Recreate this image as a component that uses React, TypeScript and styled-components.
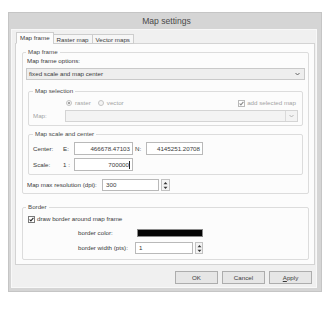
import React from 'react';
import styled, { createGlobalStyle } from 'styled-components';

const GlobalStyle = createGlobalStyle`
  body {
    margin: 0;
    background: #fff;
    font-family: "Liberation Sans", Arial, sans-serif;
  }
`;

const Page = styled.div`
  padding: 12px 0 0 8px;
`;

const Dialog = styled.div`
  width: 314px;
  box-sizing: border-box;
  background: #d5d5d5;
  border: 1px solid #c5c5c5;
  padding: 0 4px 3px 2px;
  display: flex;
  flex-direction: column;
`;

const TitleBar = styled.div`
  height: 16px;
  padding-left: 5px;
  display: flex;
  align-items: center;
  justify-content: center;
  font-size: 8.6px;
  color: #4a4a4a;
`;

const Body = styled.div`
  background: #f0f0f0;
  border: 1px solid #f8f8f8;
  padding: 2px 1px 3px 3px;
  display: flex;
  flex-direction: column;
`;

const TabStrip = styled.div`
  display: flex;
  align-items: flex-end;
  height: 12px;
  padding-left: 1px;
  margin-bottom: -1px;
  position: relative;
  z-index: 1;
`;

const Tab = styled.div<{ $active?: boolean }>`
  box-sizing: border-box;
  height: ${p => (p.$active ? 12 : 10)}px;
  padding: 0 3px ${p => (p.$active ? 2 : 0)}px;
  margin-left: ${p => (p.$active ? 0 : -1)}px;
  border: 1px solid #cdcdcd;
  border-bottom-color: ${p => (p.$active ? '#fcfcfc' : '#cdcdcd')};
  background: ${p => (p.$active ? '#fcfcfc' : '#f6f6f6')};
  display: flex;
  align-items: center;
  font-size: 6.2px;
  color: #3a3a3a;
  white-space: nowrap;
`;

const Panel = styled.div`
  border: 1px solid #d3d3d3;
  background: #fcfcfc;
  padding: 4px 5px 4px 6px;
  display: flex;
  flex-direction: column;
`;

const OuterGroup = styled.fieldset<{ $gap?: number }>`
  margin: ${p => p.$gap ?? 0}px 0 0;
  border: 1px solid #dcdcdc;
  border-radius: 2px;
  padding: 1px 3px 2px;
  min-width: 0;
  display: flex;
  flex-direction: column;
`;

const InnerGroup = styled.fieldset<{ $gap: number }>`
  margin: ${p => p.$gap}px 2px 0;
  border: 1px solid #dcdcdc;
  border-radius: 2px;
  padding: 4px 4px 3px;
  min-width: 0;
`;

const Legend = styled.legend`
  font-size: 6.2px;
  line-height: 8px;
  color: #4a4a4a;
  padding: 0 2px;
`;

const Text = styled.span<{ $muted?: boolean }>`
  font-size: 6.2px;
  line-height: 8px;
  color: ${p => (p.$muted ? '#a3a3a3' : '#3a3a3a')};
  white-space: nowrap;
`;

const OptionsLabel = styled(Text)`
  display: block;
  padding-left: 1px;
`;

const Select = styled.div`
  margin-top: 3px;
  height: 12px;
  box-sizing: border-box;
  border: 1px solid #c9c9c9;
  background: #eeeeee;
  display: flex;
  align-items: center;
  padding: 0 4px 0 2px;
`;

const SelectText = styled(Text)`
  flex: 1;
`;

const MapGrid = styled.div`
  display: grid;
  grid-template-columns: 32px 1fr;
  row-gap: 3px;
  align-items: center;
`;

const ChoiceRow = styled.div`
  grid-column: 2;
  height: 8px;
  display: flex;
  align-items: center;
  padding: 0 2px 0 1px;
`;

const Radio = styled.span<{ $checked?: boolean }>`
  width: 6px;
  height: 6px;
  box-sizing: border-box;
  border-radius: 50%;
  border: 1px solid #c4c4c4;
  background: #f4f4f4;
  display: flex;
  align-items: center;
  justify-content: center;
  margin-right: 3px;
  &::after {
    content: '';
    width: 2px;
    height: 2px;
    border-radius: 50%;
    background: ${p => (p.$checked ? '#8a8a8a' : 'transparent')};
  }
`;

const ChoiceLabel = styled(Text)`
  margin-right: 7px;
`;

const CheckItem = styled.label`
  margin-left: auto;
  display: flex;
  align-items: center;
  gap: 2px;
`;

const CheckBox = styled.span<{ $muted?: boolean }>`
  width: 7px;
  height: 7px;
  box-sizing: border-box;
  border: 1px solid ${p => (p.$muted ? '#b9b9b9' : '#7a7a7a')};
  background: #fff;
  display: flex;
  svg {
    display: block;
  }
`;

const DisabledSelect = styled.div`
  height: 12px;
  box-sizing: border-box;
  border: 1px solid #d4d4d4;
  background: #f3f3f3;
  display: flex;
  justify-content: flex-end;
`;

const ChevronBox = styled.div`
  width: 11px;
  border-left: 1px solid #dadada;
  display: flex;
  align-items: center;
  justify-content: center;
`;

const ScaleGrid = styled.div`
  display: grid;
  grid-template-columns: 30px 11px 59px 13px 57px;
  grid-auto-rows: 13px;
  row-gap: 3px;
  align-items: center;
`;

const AxisLabel = styled(Text)`
  padding-left: 2px;
`;

const Input = styled.div<{ $right?: boolean; $h?: number; $w?: number }>`
  height: ${p => p.$h ?? 13}px;
  width: ${p => (p.$w ? `${p.$w}px` : 'auto')};
  box-sizing: border-box;
  border: 1px solid #b9b9b9;
  background: #fff;
  display: flex;
  align-items: center;
  justify-content: ${p => (p.$right ? 'flex-end' : 'flex-start')};
  padding: 0 2px 0 3px;
`;

const Caret = styled.span`
  width: 1px;
  height: 8px;
  background: #222;
`;

const ResolutionRow = styled.div`
  margin-top: 4px;
  display: flex;
  align-items: center;
`;

const ResolutionLabel = styled(Text)`
  width: 76px;
  padding-left: 1px;
  box-sizing: border-box;
`;

const Spinner = styled.div<{ $w: number }>`
  width: ${p => p.$w}px;
  height: 12px;
  margin-left: 2px;
  box-sizing: border-box;
  border: 1px solid #c2c2c2;
  background: #f3f3f3;
  display: flex;
  align-items: center;
  justify-content: center;
`;

const BorderCheckRow = styled.label`
  margin: 3px 0 0 2px;
  height: 8px;
  display: flex;
  align-items: center;
  gap: 2px;
`;

const BorderGrid = styled.div`
  margin: 5px 0 3px 52px;
  display: grid;
  grid-template-columns: 57px auto;
  row-gap: 4px;
  align-items: center;
  justify-items: start;
`;

const ColorSwatch = styled.div`
  margin: 1px 0 1px 2px;
  width: 66px;
  height: 8px;
  box-sizing: border-box;
  border: 1px solid #8a8a8a;
  background: #050505;
`;

const WidthField = styled.div`
  display: flex;
  align-items: center;
`;

const ButtonRow = styled.div`
  margin-top: 6px;
  padding-right: 3px;
  display: flex;
  justify-content: flex-end;
  gap: 4px;
`;

const Button = styled.div`
  width: 43px;
  height: 13px;
  box-sizing: border-box;
  border: 1px solid #adadad;
  background: #e6e6e6;
  display: flex;
  align-items: center;
  justify-content: center;
  font-size: 6.2px;
  color: #3a3a3a;
  u {
    text-decoration-thickness: 0.5px;
  }
`;

const Chevron = ({ color = '#555' }: { color?: string }) => (
  <svg width="5" height="4" viewBox="0 0 5 4">
    <polyline points="0.5,1 2.5,3 4.5,1" fill="none" stroke={color} strokeWidth="0.9" />
  </svg>
);

const Check = ({ color }: { color: string }) => (
  <svg width="5" height="5" viewBox="0 0 5 5">
    <polyline points="0.6,2.5 1.9,3.9 4.4,0.8" fill="none" stroke={color} strokeWidth="1.1" />
  </svg>
);

const SpinArrows = () => (
  <svg width="5" height="9" viewBox="0 0 5 9">
    <polygon points="2.5,1 4.5,3.3 0.5,3.3" fill="#333" />
    <polygon points="2.5,8 4.5,5.7 0.5,5.7" fill="#333" />
  </svg>
);

const App: React.FC = () => {
  return (
    <Page>
      <GlobalStyle />
      <Dialog>
        <TitleBar>Map settings</TitleBar>
        <Body>
          <TabStrip>
            <Tab $active>Map frame</Tab>
            <Tab>Raster map</Tab>
            <Tab>Vector maps</Tab>
          </TabStrip>
          <Panel>
            <OuterGroup>
              <Legend>Map frame</Legend>
              <OptionsLabel>Map frame options:</OptionsLabel>
              <Select>
                <SelectText>fixed scale and map center</SelectText>
                <Chevron />
              </Select>

              <InnerGroup $gap={7}>
                <Legend>Map selection</Legend>
                <MapGrid>
                  <ChoiceRow>
                    <Radio $checked />
                    <ChoiceLabel $muted>raster</ChoiceLabel>
                    <Radio />
                    <ChoiceLabel $muted>vector</ChoiceLabel>
                    <CheckItem>
                      <CheckBox $muted>
                        <Check color="#8c8c8c" />
                      </CheckBox>
                      <Text $muted>add selected map</Text>
                    </CheckItem>
                  </ChoiceRow>
                  <Text $muted>Map:</Text>
                  <DisabledSelect>
                    <ChevronBox>
                      <Chevron color="#b0b0b0" />
                    </ChevronBox>
                  </DisabledSelect>
                </MapGrid>
              </InnerGroup>

              <InnerGroup $gap={4}>
                <Legend>Map scale and center</Legend>
                <ScaleGrid>
                  <Text>Center:</Text>
                  <Text>E:</Text>
                  <Input $right>
                    <Text>466678.47103</Text>
                  </Input>
                  <AxisLabel>N:</AxisLabel>
                  <Input $right>
                    <Text>4145251.20708</Text>
                  </Input>
                  <Text>Scale:</Text>
                  <Text>1 :</Text>
                  <Input $right>
                    <Text>700000</Text>
                    <Caret />
                  </Input>
                </ScaleGrid>
              </InnerGroup>

              <ResolutionRow>
                <ResolutionLabel>Map max resolution (dpi):</ResolutionLabel>
                <Input $h={12} $w={57}>
                  <Text>300</Text>
                </Input>
                <Spinner $w={9}>
                  <SpinArrows />
                </Spinner>
              </ResolutionRow>
            </OuterGroup>

            <OuterGroup $gap={9}>
              <Legend>Border</Legend>
              <BorderCheckRow>
                <CheckBox>
                  <Check color="#2a2a2a" />
                </CheckBox>
                <Text>draw border around map frame</Text>
              </BorderCheckRow>
              <BorderGrid>
                <Text>border color:</Text>
                <ColorSwatch />
                <Text>border width (pts):</Text>
                <WidthField>
                  <Input $h={12} $w={58}>
                    <Text>1</Text>
                  </Input>
                  <Spinner $w={8}>
                    <SpinArrows />
                  </Spinner>
                </WidthField>
              </BorderGrid>
            </OuterGroup>
          </Panel>
          <ButtonRow>
            <Button>OK</Button>
            <Button>Cancel</Button>
            <Button>
              <span>
                <u>A</u>pply
              </span>
            </Button>
          </ButtonRow>
        </Body>
      </Dialog>
    </Page>
  );
};

export default App;
